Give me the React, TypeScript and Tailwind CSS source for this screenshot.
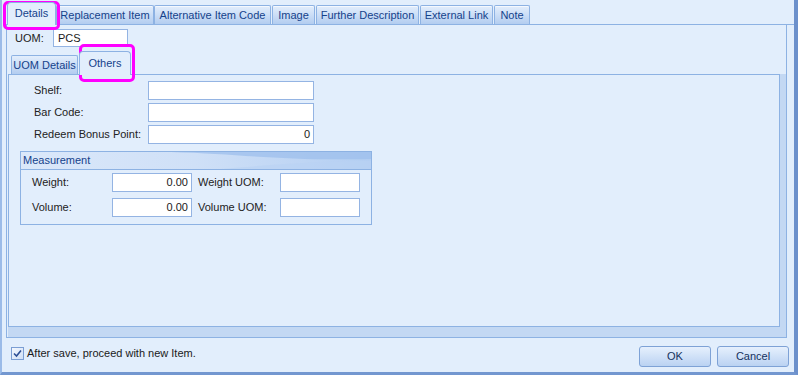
import React from 'react';

type TabDef = {
  label: string;
  className: string;
  active?: boolean;
};

const topTabs: TabDef[] = [
  { label: 'Details', className: 'w-[49px]', active: true },
  { label: 'Replacement Item', className: 'w-[98px]' },
  { label: 'Alternative Item Code', className: 'w-[117px]' },
  { label: 'Image', className: 'w-[43px] ml-[1px]' },
  { label: 'Further Description', className: 'w-[103px] ml-[1px]' },
  { label: 'External Link', className: 'w-[73px] ml-[1px]' },
  { label: 'Note', className: 'w-[36px] ml-[1px]' },
];

function Tab({ label, className, active }: TabDef) {
  if (active) {
    return (
      <div
        className={`relative z-10 -mb-px flex h-[23px] items-center justify-center rounded-t-[4px] border border-b-0 border-[#8db2e3] bg-[#e2eefc] pb-[2px] text-[#15428b] ${className}`}
      >
        {label}
      </div>
    );
  }
  return (
    <div
      className={`flex h-[19px] items-center justify-center rounded-t-[2px] border border-b-0 border-[#8db2e3] bg-gradient-to-b from-[#e3eefc] to-[#b3cdf0] text-[#15428b] shadow-[inset_0_1px_0_#f4f8fe] ${className}`}
    >
      {label}
    </div>
  );
}

function TextBox({ className, value }: { className: string; value?: string }) {
  return (
    <div
      className={`flex items-center justify-end border border-[#94b4e3] bg-white px-[3px] text-[#1a1a1a] ${className}`}
    >
      {value}
    </div>
  );
}

function FieldRow({ label, value }: { label: string; value?: string }) {
  return (
    <div className="flex h-[19px] items-center pl-[25px]">
      <span className="w-[114px] text-[#222]">{label}</span>
      <TextBox className="h-[19px] w-[166px]" value={value} />
    </div>
  );
}

function MeasureRow({
  label,
  value,
  uomLabel,
}: {
  label: string;
  value: string;
  uomLabel: string;
}) {
  return (
    <div className="flex h-[19px] items-center pl-[11px]">
      <span className="w-[80px] text-[#222]">{label}</span>
      <TextBox className="h-[19px] w-[80px]" value={value} />
      <span className="ml-[6px] w-[82px] text-[#222]">{uomLabel}</span>
      <TextBox className="h-[19px] w-[80px]" />
    </div>
  );
}

export default function App() {
  return (
    <div className="relative box-border flex h-[375px] w-[798px] flex-col overflow-hidden border-b-[3px] border-l-2 border-r-4 border-b-[#7397d0] border-l-[#9bbbe8] border-r-[#6c90cb] bg-[#e2eefc] font-['Liberation_Sans',Arial,sans-serif] text-[11px] leading-none">
      {/* main tab strip */}
      <div className="ml-[4px] flex h-[25px] items-end border-b border-[#8db2e3] pl-[1px]">
        {topTabs.map((t) => (
          <Tab key={t.label} {...t} />
        ))}
      </div>

      {/* Details page */}
      <div className="ml-[4px] box-border flex h-[313px] w-[781px] flex-col border-x border-b border-[#8db2e3]">
        <div className="mt-[4px] flex h-[18px] items-center pl-[8px]">
          <span className="w-[38px] text-[#222]">UOM:</span>
          <div className="flex h-[18px] w-[75px] items-center border border-[#94b4e3] bg-white px-[4px] text-[#1a1a1a]">
            PCS
          </div>
        </div>

        {/* inner tabs */}
        <div className="ml-[1px] mt-[4px] flex flex-1 flex-col">
          <div className="flex h-[23px] items-end pl-[3px]">
            <div className="flex h-[19px] w-[67px] items-center justify-center rounded-t-[2px] border border-b-0 border-[#8db2e3] bg-gradient-to-b from-[#e3eefc] to-[#b3cdf0] text-[#15428b]">
              UOM Details
            </div>
            <div className="relative z-10 -mb-px ml-[1px] flex h-[24px] w-[52px] items-center justify-center rounded-t-[4px] border border-b-0 border-[#8db2e3] bg-[#e2eefc] pb-[1px] text-[#15428b]">
              Others
            </div>
          </div>

          <div className="flex flex-1 flex-col bg-[#c3d8f3] pb-[10px] pr-[6px]">
            <div className="flex flex-1 flex-col border border-[#8db2e3] bg-[#e2eefc] pt-[6px]">
              <div className="flex flex-col gap-[3px]">
                <FieldRow label="Shelf:" />
                <FieldRow label="Bar Code:" />
                <FieldRow label="Redeem Bonus Point:" value="0" />
              </div>

              <div className="ml-[11px] mt-[7px] box-border flex h-[74px] w-[352px] flex-col border border-[#8db2e3]">
                <div className="relative flex h-[18px] items-center overflow-hidden border-b border-[#8db2e3] bg-gradient-to-r from-[#dbe8fa] via-[#cfe0f7] to-[#b3cef2] pl-[2px] text-[#15428b]">
                  <svg
                    className="absolute inset-0 h-full w-full"
                    viewBox="0 0 350 17"
                    preserveAspectRatio="none"
                  >
                    <path
                      d="M150 0 C 220 2, 260 9, 350 7 L350 0 Z"
                      fill="#9dbfec"
                      opacity="0.75"
                    />
                    <path
                      d="M200 17 C 260 12, 300 9, 350 9 L350 17 Z"
                      fill="#b9d2f3"
                      opacity="0.6"
                    />
                  </svg>
                  <span className="relative">Measurement</span>
                </div>
                <div className="flex flex-col gap-[6px] pt-[3px]">
                  <MeasureRow label="Weight:" value="0.00" uomLabel="Weight UOM:" />
                  <MeasureRow label="Volume:" value="0.00" uomLabel="Volume UOM:" />
                </div>
              </div>
            </div>
          </div>
        </div>
      </div>

      {/* bottom bar */}
      <div className="flex h-[34px] items-start pl-[9px] pr-[5px]">
        <div className="mt-[9px] flex items-center">
          <div className="flex h-[13px] w-[13px] items-center justify-center border border-[#7b9ed3] bg-gradient-to-br from-[#f4f8fe] to-[#cfdff6]">
            <svg width="11" height="11" viewBox="0 0 11 11">
              <path
                d="M2 5.5 L4.5 8 L9 2.5"
                fill="none"
                stroke="#2d4f95"
                strokeWidth="1.6"
              />
            </svg>
          </div>
          <span className="ml-[3px] text-[#1a1a1a]">After save, proceed with new Item.</span>
        </div>
        <div className="ml-auto mt-[8px] flex gap-[6px]">
          <button className="flex h-[21px] w-[72px] items-center justify-center rounded-[3px] border border-[#7ea2d6] bg-gradient-to-b from-[#e6f0fd] to-[#bad2f2] text-[#15325e]">
            OK
          </button>
          <button className="flex h-[21px] w-[72px] items-center justify-center rounded-[3px] border border-[#7ea2d6] bg-gradient-to-b from-[#e6f0fd] to-[#bad2f2] text-[#15325e]">
            Cancel
          </button>
        </div>
      </div>

      {/* highlight annotations */}
      <div className="pointer-events-none absolute left-[1px] top-[1px] h-[29px] w-[57px] rounded-[5px] border-[3px] border-[#ff00ff]" />
      <div className="pointer-events-none absolute left-[77px] top-[44px] h-[38px] w-[56px] rounded-[5px] border-[3px] border-[#ff00ff]" />
    </div>
  );
}
